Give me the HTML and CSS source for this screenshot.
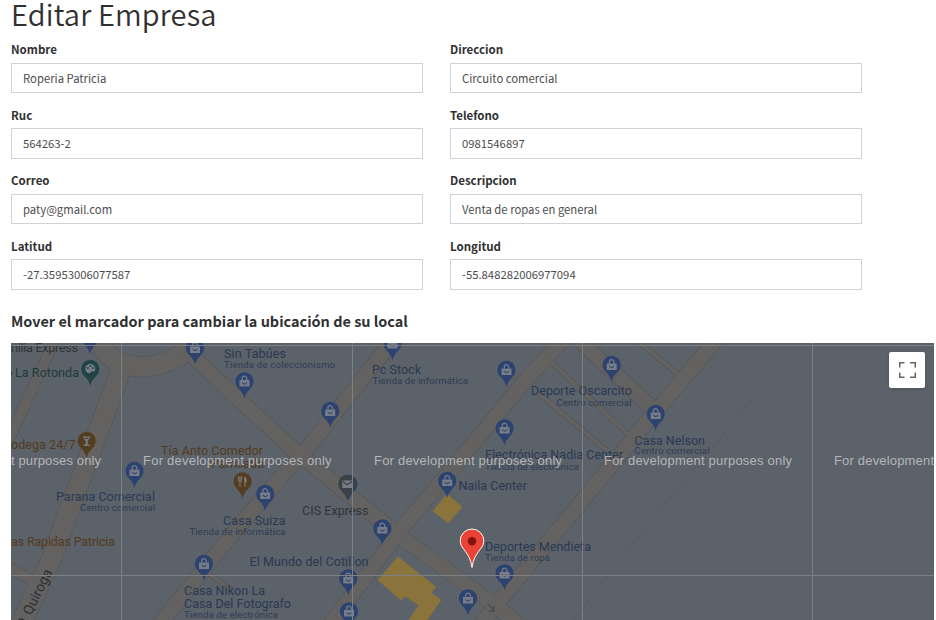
FILE: index.html
```html
<!DOCTYPE html>
<html lang="es">
<head>
<meta charset="utf-8">
<title>Editar Empresa</title>
<link rel="stylesheet" href="styles.css">
</head>
<body>
<main class="page">
  <h1 class="title">Editar Empresa</h1>
  <form class="fields">
    <div class="field"><label class="label" for="nombre">Nombre</label><input class="input" id="nombre" value="Roperia Patricia"></div>
    <div class="field"><label class="label" for="direccion">Direccion</label><input class="input" id="direccion" value="Circuito comercial"></div>
    <div class="field"><label class="label" for="ruc">Ruc</label><input class="input" id="ruc" value="564263-2"></div>
    <div class="field"><label class="label" for="telefono">Telefono</label><input class="input" id="telefono" value="0981546897"></div>
    <div class="field"><label class="label" for="correo">Correo</label><input class="input" id="correo" value="paty@gmail.com"></div>
    <div class="field"><label class="label" for="descripcion">Descripcion</label><input class="input" id="descripcion" value="Venta de ropas en general"></div>
    <div class="field"><label class="label" for="latitud">Latitud</label><input class="input" id="latitud" value="-27.35953006077587"></div>
    <div class="field"><label class="label" for="longitud">Longitud</label><input class="input" id="longitud" value="-55.848282006977094"></div>
  </form>
  <h2 class="subtitle">Mover el marcador para cambiar la ubicación de su local</h2>
  <div class="map">
    <svg class="map-canvas" viewBox="11 343 923 277" width="923" height="277">
      <defs>
        <path id="drop" d="M0 17C-1.200 11.500-3.500 9.800-6.300 6.500A9.100 9.100 0 1 1 6.300 6.500C3.500 9.800 1.200 11.500 0 17Z"/>
        <g id="shop">
          <use href="#drop" class="blue"/>
          <path class="glyph" d="M-5-1.500H5V5H-5Z"/>
          <path class="glyph-line" d="M-2.300-1.500V-3A2.300 2.300 0 0 1 2.300-3V-1.500"/>
          <path class="smile" d="M-2.400 1Q0 4.200 2.400 1"/>
        </g>
        <g id="roads">
          <path class="avenue" d="M125 358L122 367L84 470L51 560L20 626"/>
          <path class="avenue" d="M98 338Q108 366 143 367Q170 366 192 346"/>
          <path class="street-wide" d="M186 350L235 396L294 450L391 529L402 538L470 587L500 609L520 626"/>
          <path class="street-wide" d="M158 626L230 537L288 469L306 450L383 353L396 336"/>
          <path class="street-wide" d="M329 626L402 528L451 470L525 381L565 337"/>
          <path class="street-wide" d="M577 338L652 408"/>
          <path class="street-wide" d="M719 336L690 371L650 418L597 483L500 600L480 626"/>
          <path class="street-narrow" d="M55 338L47 357L11 435L5 448"/>
          <path class="street-narrow" d="M5 565L32 580"/>
          <path class="lane" d="M549 360L630 436M538 393L606 450M633 337L680 376M205 571L231 590"/>
        </g>
      </defs>
      <use href="#roads" class="casing"/>
      <use href="#roads" class="surface"/>
      <path class="trail" d="M753 397L713 448L673 494L573 620"/>
      <path class="building" d="M398 557L436 587L431 593L441 600L427 620H409L419 605L405 596L401 600L378 580ZM447 494L462 507L448 523L433 511Z"/>
      <path class="arrow" d="M488 604L494 610M494 606V611H489"/>

      <use href="#shop" x="90" y="337"/>
      <use href="#shop" x="195" y="348"/>
      <use href="#shop" x="134.500" y="471"/>
      <use href="#shop" x="244.500" y="381.500"/>
      <use href="#shop" x="330.200" y="411"/>
      <use href="#shop" x="392.500" y="343.500"/>
      <use href="#shop" x="447.200" y="481"/>
      <use href="#shop" x="265.200" y="494"/>
      <use href="#shop" x="382.300" y="528.500"/>
      <use href="#shop" x="348.300" y="578.500"/>
      <use href="#shop" x="349" y="611.500"/>
      <use href="#shop" x="204" y="564"/>
      <use href="#shop" x="506.500" y="370"/>
      <use href="#shop" x="611.700" y="365"/>
      <use href="#shop" x="655.700" y="414"/>
      <use href="#shop" x="504.600" y="428.500"/>
      <use href="#shop" x="504.600" y="573.500"/>
      <use href="#shop" x="468" y="598.500"/>

      <g transform="translate(90.300 369)">
        <use href="#drop" class="teal"/>
        <path class="glyph" d="M-5 0A5 5 0 1 1 4.500 2C3 3.500 1 1.500 0 3.500S-5 3-5 0Z"/>
        <g class="teal"><circle cx="-2.500" cy="-1" r="1"/><circle cx="0" cy="-3" r="1"/><circle cx="2.700" cy="-1" r="1"/></g>
      </g>
      <g transform="translate(86.700 441)">
        <use href="#drop" class="brown"/>
        <path class="glyph" d="M-4-4.500H4L1 0V3.500H3V5H-3V3.500H-1V0Z"/>
        <path class="brown" d="M-2-3.200H2L1-1.900H-1Z"/>
      </g>
      <g transform="translate(242.500 481.500)">
        <use href="#drop" class="brown"/>
        <path class="fork" d="M-4-5V-2Q-4 0-2.500 0T-1-2V-5M-2.500-5V5.500M2.500 5.500V-4.500"/>
        <path class="glyph" d="M1.800-5Q4.500-4 4.200.8H1.800Z"/>
      </g>
      <use href="#drop" class="blue" x="348.500" y="484"/>
      <g transform="translate(347.300 484)">
        <use href="#drop" class="gray"/>
        <path class="glyph" d="M-5-3.500H5V4H-5Z"/>
        <path class="envelope" d="M-4.500-2.500L0 .8L4.500-2.500"/>
      </g>

      <g class="place">
        <text class="shade" x="11" y="352" textLength="67">nilia Express</text>
        <text class="green" x="15" y="377" textLength="64">La Rotonda</text>
        <circle class="green" cx="10.500" cy="373.500" r="1.700"/>
        <text class="amber" x="11" y="449" textLength="64.500">odega 24/7</text>
        <text x="224" y="358" textLength="62">Sin Tabúes</text>
        <text x="372" y="373.500" textLength="49">Pc Stock</text>
        <text class="amber" x="161" y="455" textLength="102">Tía Anto Comedor</text>
        <text class="amber" x="211" y="468" textLength="53">Parrillada</text>
        <text x="56" y="501" textLength="99">Parana Comercial</text>
        <text class="amber" x="11" y="546" textLength="104">as Rapidas Patricia</text>
        <text x="223" y="524.500" textLength="62.500">Casa Suiza</text>
        <text class="shade" x="302" y="514.500" textLength="66.500">CIS Express</text>
        <text x="249.500" y="566" textLength="119">El Mundo del Cotillon</text>
        <text x="184" y="595" textLength="81">Casa Nikon La</text>
        <text x="184" y="607.500" textLength="107">Casa Del Fotografo</text>
        <text x="531" y="395" textLength="101">Deporte Oscarcito</text>
        <text x="485" y="459" textLength="138">Electrónica Nadia Center</text>
        <text x="458.500" y="489.500" textLength="68.500">Naila Center</text>
        <text x="634.500" y="444.500" textLength="70.500">Casa Nelson</text>
        <text x="485" y="551" textLength="106">Deportes Mendieta</text>
        <text class="street" transform="translate(31 616) rotate(-64)" textLength="49">Quiroga</text>
        <path class="street-tail" d="M18 621Q21 617 25 621"/>
      </g>
      <g class="kind">
        <text x="224" y="367.500" textLength="111">Tienda de coleccionismo</text>
        <text x="372.500" y="383.500" textLength="95.500">Tienda de informática</text>
        <text x="80" y="510.500" textLength="75">Centro comercial</text>
        <text x="189.500" y="534.800" textLength="96">Tienda de informática</text>
        <text x="184" y="617.800" textLength="94">Tienda de electrónica</text>
        <text x="556.500" y="405.500" textLength="75">Centro comercial</text>
        <text x="485" y="469.500" textLength="94">Tienda de electrónica</text>
        <text x="634.500" y="454" textLength="75">Centro comercial</text>
        <text x="485" y="561" textLength="65">Tienda de ropa</text>
      </g>

      <path class="tile" d="M121.500 343V620M352.500 343V620M582.500 343V620M812.500 343V620M11 345.500H934M11 575.500H934"/>
      <g class="watermark">
        <text x="11" y="465" textLength="90">t purposes only</text>
        <text x="143" y="465" textLength="188.500">For development purposes only</text>
        <text x="374" y="465" textLength="188">For development purposes only</text>
        <text x="604" y="465" textLength="188">For development purposes only</text>
        <text x="834" y="465" textLength="100">For development</text>
      </g>
      <path class="marker" d="M472 567.500C470.500 558 467.500 554.500 464 549.500A11.800 11.800 0 1 1 480 549.500C476.500 554.500 473.500 558 472 567.500Z"/>
      <circle class="marker-dot" cx="472" cy="541.300" r="4.200"/>
    </svg>
    <button class="fullscreen" type="button" aria-label="Pantalla completa">
      <svg viewBox="0 0 18 18" width="18" height="18"><path d="M1 1H6.500V2.500H2.500V6.500H1ZM12 1H18V6.500H16.500V2.500H12ZM1 11.500H2.500V15.500H6.500V17H1ZM16.500 11.500H18V17H12V15.500H16.500Z"/></svg>
    </button>
  </div>
</main>
</body>
</html>
```
FILE: styles.css
```css
* { box-sizing: border-box; }
body {
  margin: 0;
  overflow: hidden;
  background: #fff;
  color: #303032;
  font-family: "Noto Sans CJK SC", "Open Sans", sans-serif;
}
.page {
  width: 934px;
  height: 620px;
  padding-left: 11px;
  overflow: hidden;
}
.title {
  height: 40.4px;
  margin: 0;
  font-size: 29px;
  font-weight: 350;
  line-height: 27px;
  letter-spacing: 0.14px;
}
.fields {
  display: grid;
  grid-template-columns: 412px 412px;
  grid-auto-rows: 65.4px;
  column-gap: 27px;
}
.field {
  display: flex;
  flex-direction: column;
}
.label {
  height: 22.4px;
  font-size: 11.5px;
  font-weight: 700;
  line-height: 18px;
}
.input {
  width: 100%;
  height: 30.6px;
  padding: 0 11px;
  border: 1px solid #cfd1db;
  border-radius: 0;
  background: #fff;
  color: #4d4d50;
  font: 400 11.3px/18px "Noto Sans CJK SC", "Open Sans", sans-serif;
}
.subtitle {
  height: 41px;
  margin: 0;
  padding-top: 7.4px;
  font-size: 14.46px;
  font-weight: 700;
  line-height: 24px;
}
.map {
  position: relative;
  width: 923px;
  height: 277px;
  overflow: hidden;
  background: #5b6269;
}
.map-canvas { display: block; }
.casing { --extra: 1.6px; stroke: #56585b; }
.surface { --extra: 0px; stroke: #636261; }
#roads path {
  fill: none;
  stroke-width: calc(var(--w) + var(--extra));
  stroke-linejoin: round;
}
.avenue { --w: 19.5px; }
.street-wide { --w: 14.5px; }
.street-narrow { --w: 10px; }
.lane { --w: 4px; }
.trail { fill: none; stroke: #5c5a60; stroke-width: 1; }
.building { fill: #8a743b; stroke: #927435; stroke-width: 0.7; }
.arrow { fill: none; stroke: #4c4c4e; stroke-width: 1.5; }
.blue { fill: #2c4270; }
.teal { fill: #204445; }
.brown { fill: #543d20; }
.gray { fill: #3b4247; }
.glyph { fill: #777c86; }
.glyph-line { fill: none; stroke: #777c86; stroke-width: 1.3; }
.smile { fill: none; stroke: #2c4270; stroke-width: 1.1; }
.fork { fill: none; stroke: #77736c; stroke-width: 1.2; }
.envelope { fill: none; stroke: #3b4247; stroke-width: 1.2; }
.place { fill: #2a3954; font: 400 12.5px Roboto, sans-serif; }
.kind { fill: #2e3c55; font: 400 9.6px Roboto, sans-serif; }
.shade { fill: #303439; }
.green { fill: #1e3b3d; }
.amber { fill: #533a1d; }
.street { fill: #2d3035; font-size: 14px; }
.street-tail { fill: none; stroke: #2d3035; stroke-width: 1.5; }
.tile { fill: none; stroke: #7e8184; stroke-width: 1; }
.watermark { fill: #b4b6b8; font: 400 13px "Liberation Sans", Arial, sans-serif; }
.marker { fill: #ea4335; stroke: #fff; stroke-width: 1; }
.marker-dot { fill: #811411; }
.fullscreen {
  position: absolute;
  top: 9px;
  right: 9px;
  display: grid;
  place-items: center;
  width: 36px;
  height: 36px;
  padding: 0;
  border: 0;
  border-radius: 2px;
  background: #fff;
  box-shadow: 0 1px 4px -1px rgba(0, 0, 0, 0.3);
}
.fullscreen svg { fill: #666; }
```
